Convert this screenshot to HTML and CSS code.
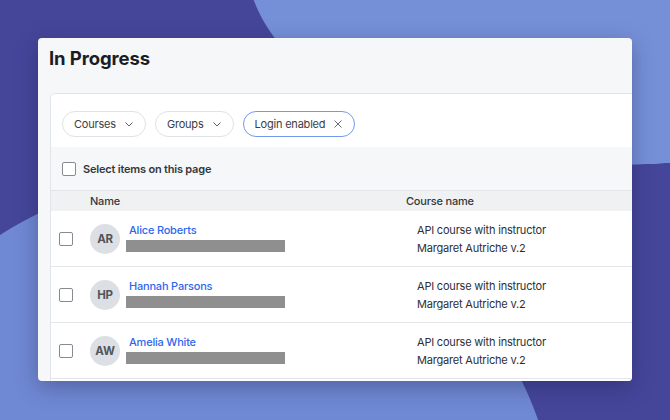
FILE: index.html
```html
<!DOCTYPE html>
<html lang="en">
<head>
  <meta charset="UTF-8">
  <title>In Progress</title>
  <link rel="stylesheet" href="styles.css">
</head>
<body>

  <div class="card">
    <h1 class="title">In Progress</h1>

    <div class="panel">
      <!-- Filters -->
      <div class="filters">
        <button class="chip">Courses
          <svg width="8" height="5" viewBox="0 0 8 5"><path d="M0.5 0.5l3.5 3.5L7.5 0.5" fill="none" stroke="#5d6168" stroke-width="1"/></svg>
        </button>
        <button class="chip">Groups
          <svg width="8" height="5" viewBox="0 0 8 5"><path d="M0.5 0.5l3.5 3.5L7.5 0.5" fill="none" stroke="#5d6168" stroke-width="1"/></svg>
        </button>
        <button class="chip chip-active">Login enabled
          <svg width="8" height="8" viewBox="0 0 8 8"><path d="M0.5 0.5l7 7M7.5 0.5l-7 7" fill="none" stroke="#6a6e75" stroke-width="1"/></svg>
        </button>
      </div>

      <!-- Select all -->
      <div class="select-row">
        <span class="check"></span>
        <span>Select items on this page</span>
      </div>

      <!-- Table -->
      <div class="table-head">
        <span></span>
        <span>Name</span>
        <span>Course name</span>
      </div>

      <div class="table-row">
        <span class="check"></span>
        <div class="person">
          <div class="avatar">AR</div>
          <div class="person-info">
            <a class="person-name">Alice Roberts</a>
            <div class="redacted"></div>
          </div>
        </div>
        <div class="course">API course with instructor<br>Margaret Autriche v.2</div>
      </div>

      <div class="table-row">
        <span class="check"></span>
        <div class="person">
          <div class="avatar">HP</div>
          <div class="person-info">
            <a class="person-name">Hannah Parsons</a>
            <div class="redacted"></div>
          </div>
        </div>
        <div class="course">API course with instructor<br>Margaret Autriche v.2</div>
      </div>

      <div class="table-row">
        <span class="check"></span>
        <div class="person">
          <div class="avatar">AW</div>
          <div class="person-info">
            <a class="person-name">Amelia White</a>
            <div class="redacted"></div>
          </div>
        </div>
        <div class="course">API course with instructor<br>Margaret Autriche v.2</div>
      </div>

      <div class="table-row"></div>
    </div>
  </div>

</body>
</html>
```

FILE: styles.css
```css
body {
  margin: 0;
  padding: 0;
  height: 420px;
  overflow: hidden;
  font-family: 'Inter', 'Noto Sans', sans-serif;
  letter-spacing: -0.2px;
  background:
    radial-gradient(ellipse 374px 205px at 620px -40px, #7690d8 99.7%, transparent 100%),
    radial-gradient(circle at 196px 540px, #7089d4 362px, transparent 363px),
    #45469a;
  color: #33373d;
}

.card {
  margin: 38px 0 0 38px;
  width: 594px;
  height: 343px;
  overflow: hidden;
  border-radius: 4px;
  background: #f6f7f9;
  box-shadow: 0 6px 22px rgba(25, 25, 70, 0.35);
}

.title {
  margin: 0;
  padding: 8px 11px 0;
  font-size: 18.5px;
  line-height: 24px;
  font-weight: 700;
  letter-spacing: -0.1px;
  color: #1a1e24;
}

.panel {
  margin: 23px 0 0 12px;
  width: 620px;
  background: #fff;
  border: 1px solid #e1e4e8;
  border-radius: 5px 0 0 0;
}

.filters {
  display: flex;
  gap: 9px;
  padding: 17px 11px 10px;
}

.chip {
  display: flex;
  align-items: center;
  gap: 9px;
  height: 26px;
  padding: 0 12px 0 11px;
  background: #fff;
  border: 1px solid #dfe2e6;
  border-radius: 13px;
  font-family: inherit;
  font-size: 11px;
  letter-spacing: -0.2px;
  color: #3a3e45;
}

.chip-active {
  border-color: #7398f0;
  gap: 9px;
}

.select-row {
  display: flex;
  align-items: center;
  gap: 7px;
  height: 43px;
  padding-left: 11px;
  background: #f6f7f9;
  font-size: 11px;
  font-weight: 600;
  color: #33373d;
}

.check {
  display: block;
  width: 12px;
  height: 12px;
  border: 1.5px solid #878a91;
  border-radius: 2px;
  background: #fff;
}

.table-head,
.table-row {
  display: grid;
  grid-template-columns: 39px 316px 1fr;
  align-items: center;
}

.table-head {
  height: 20px;
  border-top: 1px solid #e2e4e8;
  background: #eff1f3;
  font-size: 11px;
  font-weight: 500;
  color: #33373d;
}

.table-row {
  height: 55px;
  border-bottom: 1px solid #e4e6e9;
}

.table-row .check {
  margin-left: 8px;
}

.person {
  display: flex;
  align-items: center;
  gap: 6px;
}

.avatar {
  width: 30px;
  height: 30px;
  border-radius: 50%;
  background: #dcdfe3;
  display: flex;
  align-items: center;
  justify-content: center;
  font-size: 11.5px;
  font-weight: 700;
  color: #50555c;
}

.person-info {
  padding-bottom: 2px;
}

.person-name {
  display: block;
  padding-left: 3px;
  font-size: 11px;
  line-height: 14px;
  font-weight: 500;
  color: #2f66ee;
}

.redacted {
  margin-top: 3px;
  width: 159px;
  height: 12px;
  background: #8f8f8f;
}

.course {
  padding-left: 11px;
  font-size: 11px;
  line-height: 18px;
  color: #2c3036;
}
```
